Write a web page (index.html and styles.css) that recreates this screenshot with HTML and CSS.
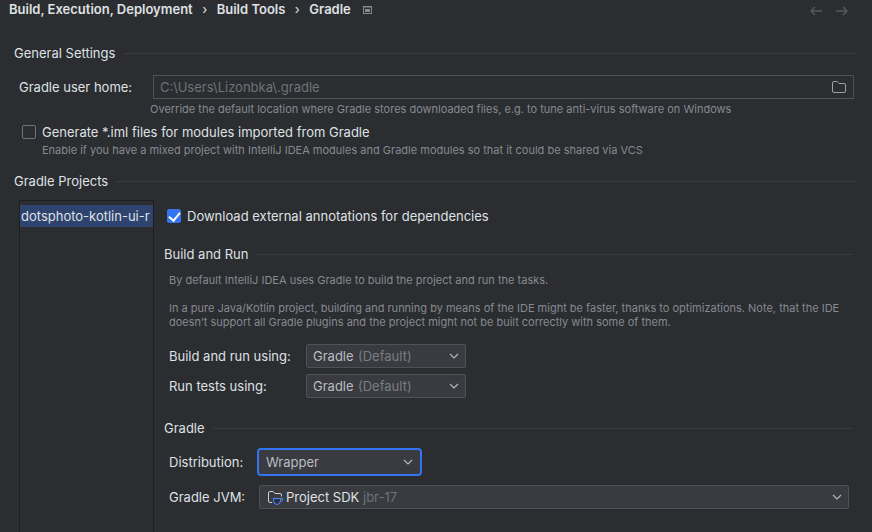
FILE: index.html
```html
<!DOCTYPE html>
<html lang="en">
<head>
<meta charset="utf-8">
<title>Gradle Settings</title>
<link rel="stylesheet" href="styles.css">
</head>
<body>
<header class="topbar">
  <nav class="crumbs" aria-label="Breadcrumb">
    <a href="#">Build, Execution, Deployment</a>
    <span class="sep">›</span>
    <a href="#">Build Tools</a>
    <span class="sep">›</span>
    <a href="#">Gradle</a>
    <svg class="scope" width="9" height="8" viewBox="0 0 9 8" aria-hidden="true"><rect x=".5" y=".5" width="8" height="7" fill="none" stroke="#868a91"/><path d="M0 1h9" stroke="#868a91"/><rect x="2" y="3" width="5" height="3" fill="#868a91"/></svg>
  </nav>
  <div class="history">
    <button type="button" aria-label="Back"><svg width="12" height="10" viewBox="0 0 12 10"><path d="M12 5H1M5 1L1 5l4 4"/></svg></button>
    <button type="button" aria-label="Forward"><svg width="12" height="10" viewBox="0 0 12 10"><path d="M0 5h11M7 1l4 4-4 4"/></svg></button>
  </div>
</header>

<main class="page">
  <h2 class="title">General Settings</h2>
  <div class="home-row">
    <label for="home">Gradle user home:</label>
    <div class="path">
      <input id="home" type="text" placeholder="C:\Users\Lizonbka\.gradle">
      <button type="button" aria-label="Browse"><svg width="14" height="12" viewBox="0 0 14 12"><path d="M.5 2Q.5.5 2 .5h3.200L7 2.500h5q1.500 0 1.500 1.500v6q0 1.500-1.500 1.500H2Q.5 11.500.5 10z"/></svg></button>
    </div>
  </div>
  <p class="hint home-hint">Override the default location where Gradle stores downloaded files, e.g. to tune anti-virus software on Windows</p>
  <label class="check iml"><input type="checkbox">Generate *.iml files for modules imported from Gradle</label>
  <p class="hint iml-hint">Enable if you have a mixed project with IntelliJ IDEA modules and Gradle modules so that it could be shared via VCS</p>

  <h2 class="title projects-title">Gradle Projects</h2>
  <div class="projects">
    <ul class="list">
      <li>dotsphoto-kotlin-ui-r</li>
    </ul>
    <div class="details">
      <label class="check"><input type="checkbox" checked>Download external annotations for dependencies</label>

      <h3 class="title">Build and Run</h3>
      <div class="fields">
        <p class="hint">By default IntelliJ IDEA uses Gradle to build the project and run the tasks.</p>
        <p class="hint">In a pure Java/Kotlin project, building and running by means of the IDE might be faster, thanks to optimizations. Note, that the IDE doesn’t support all Gradle plugins and the project might not be built correctly with some of them.</p>
        <div class="run-grid">
          <label for="build">Build and run using:</label>
          <div class="combo">
            <select id="build"><option>Gradle</option></select>
            <span class="note">(Default)</span>
            <svg class="chev" width="10" height="6" viewBox="0 0 10 6"><path d="M1 1l4 4 4-4"/></svg>
          </div>
          <label for="tests">Run tests using:</label>
          <div class="combo">
            <select id="tests"><option>Gradle</option></select>
            <span class="note">(Default)</span>
            <svg class="chev" width="10" height="6" viewBox="0 0 10 6"><path d="M1 1l4 4 4-4"/></svg>
          </div>
        </div>
      </div>

      <h3 class="title">Gradle</h3>
      <div class="fields gradle-grid">
        <label for="dist">Distribution:</label>
        <div class="combo focused">
          <select id="dist"><option>Wrapper</option></select>
          <svg class="chev" width="10" height="6" viewBox="0 0 10 6"><path d="M1 1l4 4 4-4"/></svg>
        </div>
        <label for="jvm">Gradle JVM:</label>
        <div class="combo sdk">
          <select id="jvm"><option>Project SDK</option></select>
          <svg class="sdk-icon" width="16" height="14" viewBox="0 0 16 14"><path d="M4 11.500H2Q.5 11.500.5 10V2Q.5.5 2 .5h3.200L7 2.500h5q1.500 0 1.500 1.500v1.500" fill="none" stroke="#ced0d6"/><path d="M5.500 7.500h7V9.500q0 4-3.500 4t-3.500-4z" fill="#25324d" stroke="#548af7"/><path d="M12.500 7.500h2v1q0 2-2 2" fill="none" stroke="#548af7"/></svg>
          <span class="note">jbr-17</span>
          <svg class="chev" width="10" height="6" viewBox="0 0 10 6"><path d="M1 1l4 4 4-4"/></svg>
        </div>
      </div>
    </div>
  </div>
</main>
</body>
</html>
```
FILE: styles.css
```css
* { box-sizing: border-box; }

body {
  margin: 0;
  min-height: 100vh;
  display: flex;
  flex-direction: column;
  background: #2b2d30;
  color: #dfe1e5;
  font: 13px/16px Inter, "Liberation Sans", sans-serif;
}

h2, h3, p, ul { margin: 0; padding: 0; }
svg { display: block; }
button { padding: 0; border: 0; background: none; }
input, select { font: inherit; }

.topbar {
  display: flex;
  justify-content: space-between;
  align-items: center;
  height: 18px;
  padding: 0 24px 0 9px;
}
.crumbs { display: flex; align-items: center; font-weight: 600; }
.crumbs a { color: inherit; text-decoration: none; }
.sep { width: 24px; text-align: center; font-weight: 400; }
.scope { margin: 2px 0 0 12px; }
.history { display: flex; gap: 14px; padding-top: 4px; }
.history path { fill: none; stroke: #55575c; stroke-width: 1.5; }

.page {
  flex: 1;
  display: flex;
  flex-direction: column;
  padding: 27px 16px 0 14px;
}

.title {
  display: flex;
  align-items: center;
  gap: 8px;
  font: inherit;
}
.title::after {
  content: "";
  flex: 1;
  height: 1px;
  background: #393b40;
}

.home-row {
  display: grid;
  grid-template-columns: 134px 1fr;
  align-items: center;
  margin: 14px 2px 0 5px;
}
.path {
  display: flex;
  align-items: center;
  height: 24px;
  padding-right: 7px;
  border: 1px solid #4e5157;
}
.path input {
  flex: 1;
  padding: 0 6px;
  border: 0;
  outline: 0;
  background: none;
  color: inherit;
}
.path input::placeholder { color: #6f737a; }
.path path { fill: none; stroke: #9da0a8; }

.hint { color: #868a91; font-size: 11px; line-height: 14px; }
.home-hint { margin: 3px 0 0 136px; }
.iml { margin: 8px 0 0 8px; }
.iml-hint { margin: 3px 0 0 28px; }
.projects-title { margin-top: 16px; }

.check { display: flex; align-items: center; gap: 6px; }
.check input {
  appearance: none;
  width: 14px;
  height: 14px;
  margin: 0;
  border: 1px solid #6f737a;
  border-radius: 2px;
}
.check input:checked {
  border-color: #3574f0;
  background: #3574f0;
  display: grid;
  place-items: center;
}
.check input:checked::before {
  content: "";
  width: 5px;
  height: 9px;
  margin-bottom: 2px;
  border: solid #fff;
  border-width: 0 2px 2px 0;
  transform: rotate(40deg);
}

.projects {
  flex: 1;
  display: flex;
  gap: 10px;
  margin: 11px 4px 0 5px;
}
.list {
  width: 135px;
  padding-top: 4px;
  border: 1px solid #1e1f22;
  border-bottom: 0;
  list-style: none;
}
.list li {
  padding-left: 1px;
  background: #2e436e;
  line-height: 22px;
  white-space: nowrap;
  overflow: hidden;
}

.details { flex: 1; padding: 8px 0 23px; }
.details .check { margin-left: 3px; }
.details .title { margin-top: 22px; }
.fields { margin-left: 5px; }
.fields .hint:first-child { margin-top: 11px; }
.fields .hint + .hint { margin-top: 14px; }

.run-grid, .gradle-grid { display: grid; align-items: center; }
.run-grid {
  grid-template-columns: 137px 160px;
  row-gap: 6px;
  margin-top: 15px;
}
.gradle-grid {
  grid-template-columns: 90px 1fr;
  row-gap: 11px;
  margin-top: 14px;
  margin-right: 3px;
}

.combo { display: grid; align-items: center; height: 24px; }
.combo > * { grid-area: 1 / 1; }
.combo select {
  appearance: none;
  width: 100%;
  height: 24px;
  padding: 0 6px;
  border: 1px solid #4e5157;
  border-radius: 2px;
  outline: 0;
  background: #393b40;
  color: #bbbdc2;
}
.note { margin-left: 52px; color: #7a7d83; pointer-events: none; }
.chev { justify-self: end; margin-right: 7px; pointer-events: none; }
.chev path { fill: none; stroke: #b4b8bf; stroke-width: 1.2; }

.focused { width: 161px; }
.focused select { outline: 2px solid #3574f0; border-color: #393b40; }
.sdk select { padding-left: 26px; color: #dfe1e5; }
.sdk .note { margin-left: 104px; color: #6f737a; }
.sdk-icon { margin: 2px 0 0 9px; pointer-events: none; }
```
